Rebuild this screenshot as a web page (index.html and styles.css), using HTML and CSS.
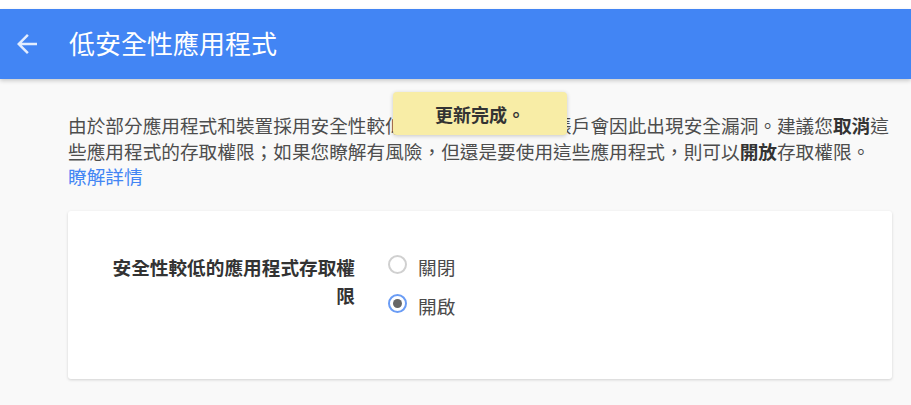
FILE: index.html
```html
<!DOCTYPE html>
<html lang="zh-Hant">
<head>
<meta charset="utf-8">
<title>低安全性應用程式</title>
<link rel="stylesheet" href="styles.css">
</head>
<body>
<div class="topstrip"></div>
<header class="appbar">
  <svg class="back" viewBox="0 0 24 24" width="30" height="30" aria-hidden="true"><path d="M20 11H7.83l5.59-5.59L12 4l-8 8 8 8 1.41-1.41L7.83 13H20v-2z"/></svg>
  <h1 class="title">低安全性應用程式</h1>
</header>
<main class="content">
  <p class="intro">由於部分應用程式和裝置採用安全性較低的登入技術，您的帳戶會因此出現安全漏洞。建議您<b>取消</b>這些應用程式的存取權限；如果您瞭解有風險，但還是要使用這些應用程式，則可以<b>開放</b>存取權限。<br><a class="link" href="#">瞭解詳情</a></p>
  <section class="card">
    <div class="setting">
      <div class="label">安全性較低的應用程式存取權限</div>
      <div class="options">
        <div class="option"><span class="radio"></span><span class="opt-text">關閉</span></div>
        <div class="option"><span class="radio checked"></span><span class="opt-text">開啟</span></div>
      </div>
    </div>
  </section>
</main>
<div class="toast">更新完成。</div>
</body>
</html>
```
FILE: styles.css
```css
* { box-sizing: border-box; }
html, body { margin: 0; padding: 0; }
body {
  background: #f9f9f9;
  font-family: "Noto Sans CJK TC", "Noto Sans", sans-serif;
  color: #4a4a4a;
  width: 911px;
  height: 405px;
  overflow: hidden;
  position: relative;
}
.topstrip { height: 9px; background: #ffffff; }
.appbar {
  height: 70px;
  background: #4285f4;
  display: flex;
  align-items: center;
  box-shadow: 0 2px 4px rgba(0,0,0,0.18);
  position: relative;
  z-index: 1;
}
.back {
  fill: rgba(255,255,255,0.85);
  margin-left: 12px;
  flex: none;
}
.title {
  margin: 0 0 2px 27px;
  font-size: 26px;
  font-weight: 400;
  color: #ffffff;
  line-height: 30px;
}
.content {
  margin-left: 68px;
  width: 824px;
}
.intro {
  margin: 33px 0 0 0;
  font-size: 18.67px;
  line-height: 25.6px;
  color: #4d4d4d;
}
.intro b { color: #333; font-weight: 700; }
.link { color: #4285f4; text-decoration: none; }
.card {
  margin-top: 22px;
  background: #ffffff;
  border-radius: 3px;
  box-shadow: 0 1px 3px rgba(0,0,0,0.16);
  padding: 42px 0 59px 0;
}
.setting { display: flex; align-items: flex-start; }
.label {
  width: 250px;
  margin-left: 37px;
  text-align: right;
  font-size: 18.67px;
  line-height: 28px;
  font-weight: 700;
  color: #333;
}
.options {
  margin-left: 33px;
  display: flex;
  flex-direction: column;
  gap: 11px;
}
.option {
  height: 28px;
  display: flex;
  align-items: center;
}
.radio {
  width: 19px;
  height: 19px;
  border-radius: 50%;
  border: 2px solid #d0d0d0;
  margin-bottom: 4px;
  display: flex;
  align-items: center;
  justify-content: center;
  flex: none;
}
.radio.checked { border-color: #6a9cf5; }
.radio.checked::after {
  content: "";
  width: 9px;
  height: 9px;
  border-radius: 50%;
  background: #666;
}
.opt-text {
  margin-left: 11px;
  font-size: 18.67px;
  line-height: 28px;
  color: #4a4a4a;
}
.toast {
  position: absolute;
  left: 393px;
  top: 92px;
  width: 174px;
  height: 43px;
  background: #f8eda6;
  border-radius: 4px;
  box-shadow: 0 1px 4px rgba(0,0,0,0.2);
  display: flex;
  align-items: center;
  justify-content: center;
  font-size: 18px;
  font-weight: 700;
  color: #333;
  z-index: 2;
}
```
